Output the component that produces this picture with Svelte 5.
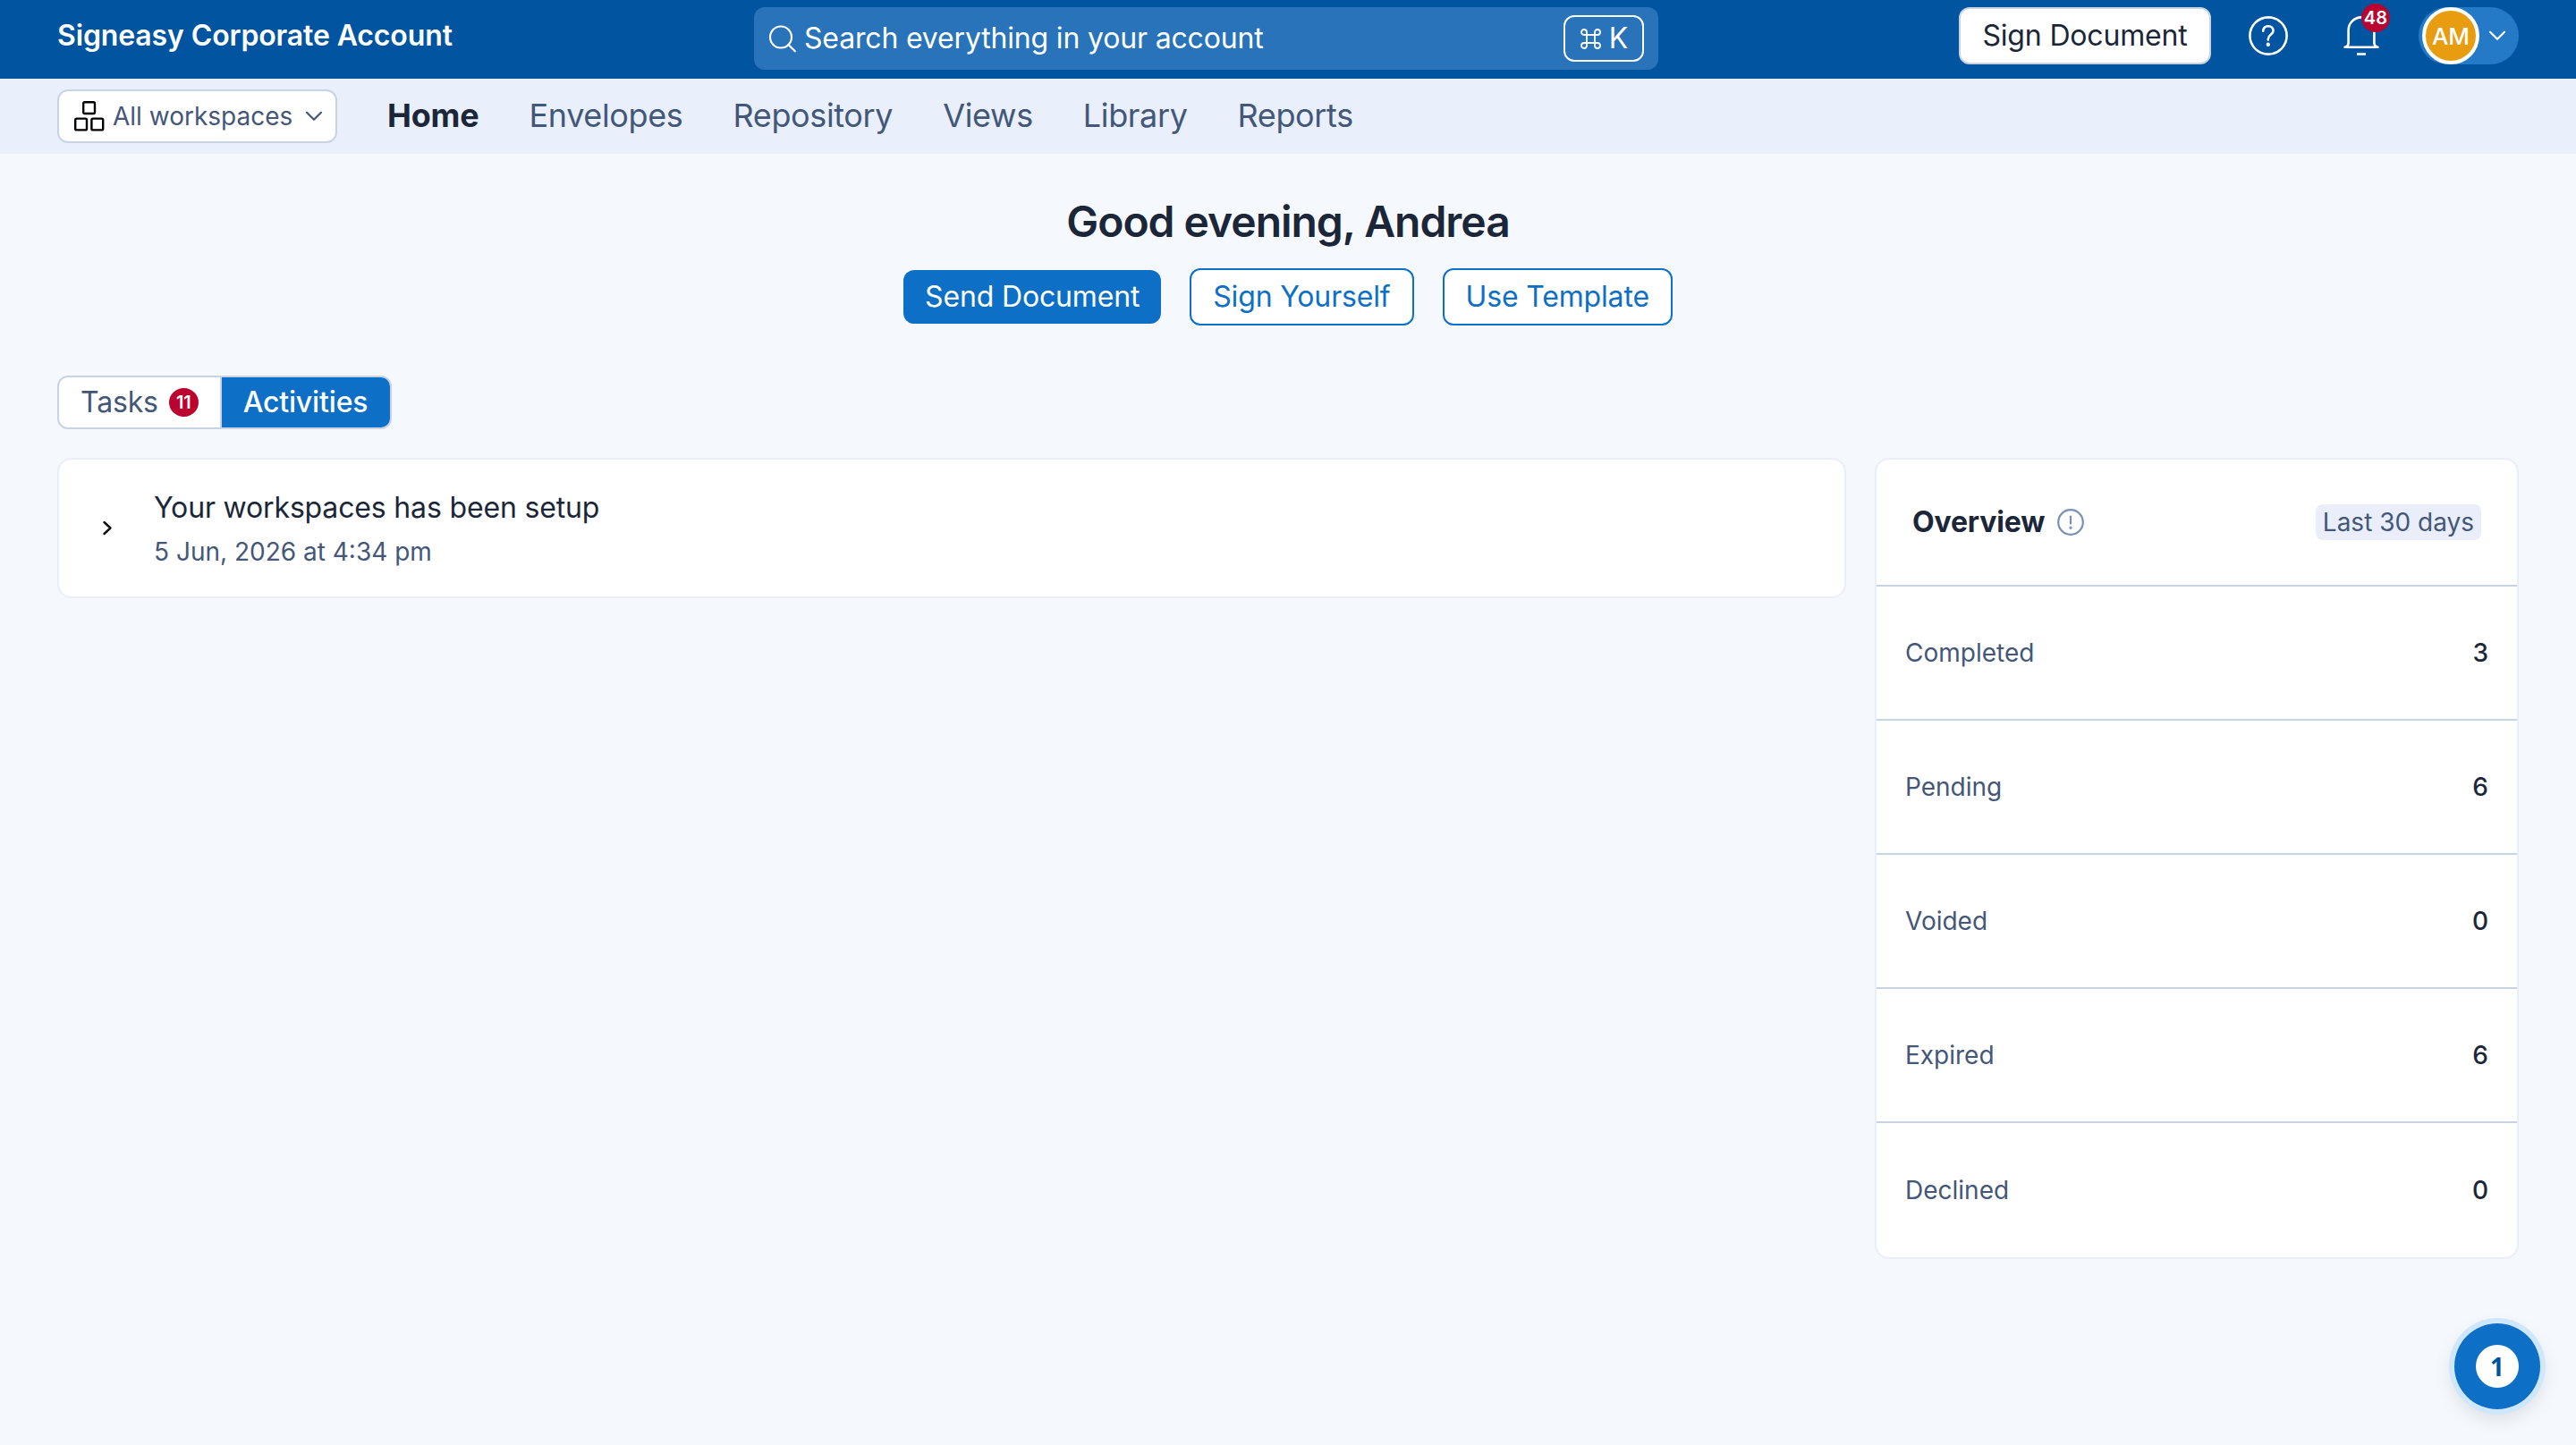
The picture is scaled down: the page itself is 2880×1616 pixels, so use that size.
<script lang="ts">
	const navItems = ["Home", "Envelopes", "Repository", "Views", "Library", "Reports"]
	const overview = [
		{ label: "Completed", count: 3 },
		{ label: "Pending", count: 6 },
		{ label: "Voided", count: 0 },
		{ label: "Expired", count: 6 },
		{ label: "Declined", count: 0 },
	]
	let current = $state("Home")
	let tab = $state("activities")
</script>

<div class="page">
	<header class="topbar">
		<div class="account">Signeasy Corporate Account</div>
		<div class="search">
			<svg width="31" height="31" viewBox="0 0 31 31" fill="none" stroke="#fff" stroke-width="2.200" stroke-linecap="round">
				<circle cx="14" cy="13.500" r="12" />
				<path d="M22.500 22l7.300 7.300" />
			</svg>
			<span class="placeholder">Search everything in your account</span>
			<span class="kbd">
				<svg width="23" height="23" viewBox="0 0 23 23" fill="none" stroke="#fff" stroke-width="1.800">
					<path d="M7 7h9v9H7zM7 7H4A3 3 0 1 1 7 4zM16 7V4A3 3 0 1 1 19 7zM16 16h3A3 3 0 1 1 16 19zM7 16v3A3 3 0 1 1 4 16z" />
				</svg>
				<span>K</span>
			</span>
		</div>
		<div class="actions">
			<button class="sign">Sign Document</button>
			<svg class="help" width="44" height="44" viewBox="0 0 44 44" fill="none" stroke="#fff" stroke-width="2.600" stroke-linecap="round" stroke-linejoin="round">
				<circle cx="22" cy="22" r="20.600" />
				<path d="M16.200 16.800c0-3.400 2.300-5.600 5.700-5.600s5.600 2.200 5.600 5.200c0 4.400-5.700 4.400-5.700 9v1.200" />
				<circle cx="21.800" cy="31.800" r="2.200" fill="#fff" stroke="none" />
			</svg>
			<div class="bell">
				<svg width="40" height="44" viewBox="0 0 40 44" fill="none" stroke="#fff" stroke-width="2.600" stroke-linejoin="round">
					<path d="M1.500 34.700h37c-2.600-.6-4.100-2.200-4.100-4.700V15.800a14.400 14.400 0 0 0-28.800 0V30c0 2.500-1.500 4.100-4.100 4.700z" />
					<path d="M15 42.500h10" />
				</svg>
				<span class="count">48</span>
			</div>
			<div class="user">
				<span class="avatar">AM</span>
				<svg width="20" height="12" viewBox="0 0 20 12" fill="none" stroke="#fff" stroke-width="2.200" stroke-linecap="round" stroke-linejoin="round">
					<path d="M2 1.800L10 9.800l8-8" />
				</svg>
			</div>
		</div>
	</header>

	<nav class="navbar">
		<button class="workspaces">
			<svg width="34" height="34" viewBox="0 0 34 34" fill="none" stroke="#000" stroke-width="2.400">
				<rect x="10.200" y="1.200" width="12.800" height="12.800" rx="1.500" />
				<rect x="1.200" y="19.600" width="12.800" height="12.800" rx="1.500" />
				<rect x="19.400" y="19.600" width="12.800" height="12.800" rx="1.500" />
			</svg>
			<span>All workspaces</span>
			<svg width="20" height="12" viewBox="0 0 20 12" fill="none" stroke="#435778" stroke-width="2.200" stroke-linecap="round" stroke-linejoin="round">
				<path d="M2 1.800L10 9.800l8-8" />
			</svg>
		</button>
		{#each navItems as item}
			<button class="navitem" class:current={item === current} onclick={() => current = item}>{item}</button>
		{/each}
	</nav>

	<main>
		<h1>Good evening, Andrea</h1>
		<div class="quick">
			<button class="primary">Send Document</button>
			<button class="outline">Sign Yourself</button>
			<button class="outline">Use Template</button>
		</div>

		<div class="tabs">
			<button class="tasks" class:selected={tab === "tasks"} onclick={() => tab = "tasks"}>
				<span class="name">Tasks</span> <span class="count">11</span>
			</button>
			<button class="activities" class:selected={tab === "activities"} onclick={() => tab = "activities"}>Activities</button>
		</div>

		<div class="columns">
			<section class="card activity">
				<svg width="12" height="18" viewBox="0 0 12 18" fill="none" stroke="#111" stroke-width="2.400" stroke-linecap="round" stroke-linejoin="round">
					<path d="M2.500 2l7 6.500l-7 6.500" />
				</svg>
				<div>
					<div class="title">Your workspaces has been setup</div>
					<div class="date">5 Jun, 2026 at 4:34 pm</div>
				</div>
			</section>
			<section class="card overview">
				<div class="head">
					<h2>Overview</h2>
					<svg width="30" height="30" viewBox="0 0 30 30" fill="none" stroke="#7790b8" stroke-width="2.200" stroke-linecap="round">
						<circle cx="15" cy="15" r="13.800" />
						<path d="M15 8.500v8" />
						<circle cx="15" cy="21.300" r=".6" fill="#7790b8" />
					</svg>
					<span class="period">Last 30 days</span>
				</div>
				{#each overview as row}
					<div class="row">
						<span>{row.label}</span>
						<b>{row.count}</b>
					</div>
				{/each}
			</section>
		</div>
	</main>

	<button class="fab"><span>1</span></button>
</div>

<style>
	:global(body) {
		background: #f5f8fd;
	}

	.page {
		min-height: 1616px;
		font-family: Inter, "Liberation Sans", sans-serif;
		color: #1b2738;
	}

	button {
		font: inherit;
		letter-spacing: inherit;
		color: inherit;
		border: none;
		background: none;
		padding: 0;
		margin: 0;
		white-space: nowrap;
		cursor: pointer;
	}

	svg {
		display: block;
		flex: none;
	}

	.topbar {
		display: grid;
		grid-template-columns: 779px 1011px 1fr;
		align-items: start;
		box-sizing: border-box;
		height: 88px;
		padding: 8px 64px 0 64px;
		background: #0054a0;
		color: #fff;
		letter-spacing: -.17px;
	}

	.account {
		font-size: 32px;
		line-height: 64px;
		font-weight: 600;
		letter-spacing: -.13px;
	}

	.search {
		display: flex;
		align-items: center;
		box-sizing: border-box;
		height: 70px;
		padding: 0 16px;
		border-radius: 12px;
		background: #2873b9;
		font-size: 32px;
	}

	.placeholder {
		flex: 1;
		margin-left: 9px;
		padding-bottom: 2px;
	}

	.kbd {
		display: flex;
		align-items: center;
		justify-content: center;
		gap: 9px;
		box-sizing: border-box;
		width: 90px;
		height: 52px;
		padding-left: 1px;
		border: 2px solid #fff;
		border-radius: 12px;
	}

	.kbd span {
		padding-bottom: 2px;
	}

	.actions {
		display: flex;
		align-items: center;
		justify-content: flex-end;
		height: 64px;
	}

	.sign {
		box-sizing: border-box;
		width: 282px;
		height: 64px;
		padding-bottom: 2px;
		border: 2px solid #c8d4e3;
		border-radius: 12px;
		background: #fff;
		color: #1b2738;
		font-size: 32px;
	}

	.help {
		margin-left: 42px;
	}

	.bell {
		position: relative;
		margin-left: 62px;
	}

	.count {
		display: flex;
		align-items: center;
		justify-content: center;
		width: 33px;
		height: 32px;
		border-radius: 50%;
		background: #bb032f;
		color: #fff;
		font-size: 20px;
		font-weight: 600;
	}

	.bell .count {
		position: absolute;
		left: 20px;
		top: -14px;
		width: 32px;
		letter-spacing: .2px;
	}

	.user {
		display: flex;
		align-items: center;
		gap: 10px;
		box-sizing: border-box;
		width: 112px;
		height: 64px;
		margin-left: 44px;
		padding-left: 4px;
		border-radius: 32px;
		background: #247ac6;
	}

	.avatar {
		display: flex;
		align-items: center;
		justify-content: center;
		box-sizing: border-box;
		width: 64px;
		height: 64px;
		border: 4px solid #fff;
		border-radius: 50%;
		background: #e89c10;
		font-size: 26px;
		font-weight: 500;
	}

	.navbar {
		display: flex;
		align-items: center;
		gap: 56px;
		box-sizing: border-box;
		height: 84px;
		padding: 0 64px;
		background: #e9f0fc;
		color: #435778;
	}

	.workspaces {
		display: flex;
		align-items: center;
		box-sizing: border-box;
		width: 313px;
		height: 60px;
		padding-left: 17px;
		border: 2px solid #c8d4e3;
		border-radius: 12px;
		background: #fff;
		font-size: 28px;
	}

	.workspaces span {
		margin: 0 14px 0 9px;
	}

	.navitem {
		padding-bottom: 2px;
		font-size: 36px;
		letter-spacing: -.36px;
	}

	.current {
		color: #1b2738;
		font-weight: 700;
		letter-spacing: -.2px;
	}

	main {
		padding: 44px 64px 0;
		letter-spacing: -.16px;
	}

	h1 {
		margin: 0;
		text-align: center;
		font-size: 48px;
		line-height: 64px;
		font-weight: 600;
		letter-spacing: -1.03px;
	}

	.quick {
		display: flex;
		align-items: center;
		justify-content: center;
		gap: 32px;
		margin-top: 20px;
		font-size: 32px;
	}

	.primary {
		height: 60px;
		padding: 0 24px 2px;
		border-radius: 12px;
		background: #0d6fc5;
		color: #fff;
	}

	.outline {
		height: 64px;
		padding: 0 24px 2px;
		border: 2px solid #0d6fc5;
		border-radius: 12px;
		background: #fff;
		color: #0d6fc5;
	}

	.tabs {
		display: flex;
		box-sizing: border-box;
		width: 374px;
		height: 60px;
		margin-top: 56px;
		border: 2px solid #c8d4e3;
		border-radius: 12px;
		background: #fff;
		overflow: hidden;
		font-size: 32px;
		color: #435778;
	}

	.tasks {
		display: flex;
		align-items: center;
		gap: 12px;
		box-sizing: border-box;
		width: 182px;
		padding-left: 24px;
		border-right: 2px solid #c8d4e3;
	}

	.name {
		padding-bottom: 2px;
	}

	.activities {
		flex: 1;
		padding: 0 1px 2px 0;
	}

	.selected {
		background: #0d6fc5;
		color: #fff;
		font-weight: 500;
	}

	.columns {
		display: grid;
		grid-template-columns: 1fr 720px;
		gap: 32px;
		align-items: start;
		margin-top: 32px;
	}

	.card {
		box-sizing: border-box;
		border: 2px solid #e9eefa;
		border-radius: 16px;
		background: #fff;
	}

	.activity {
		display: flex;
		align-items: center;
		gap: 46px;
		height: 157px;
		padding-left: 48px;
	}

	.title {
		padding-top: 2px;
		font-size: 32px;
		line-height: 48px;
	}

	.date {
		margin-top: 3px;
		font-size: 28px;
		line-height: 44px;
		letter-spacing: 0;
		color: #435778;
	}

	.head {
		display: flex;
		align-items: center;
		height: 140px;
		padding: 0 40px;
	}

	h2 {
		margin: 0 14px 0 0;
		padding-bottom: 1px;
		font-size: 32px;
		font-weight: 700;
	}

	.period {
		margin-left: auto;
		padding: 0 8px;
		border-radius: 8px;
		background: #e9eefa;
		color: #435778;
		font-size: 28px;
		line-height: 40px;
		letter-spacing: 0;
	}

	.row {
		display: flex;
		align-items: center;
		justify-content: space-between;
		box-sizing: border-box;
		height: 150px;
		padding: 0 32px;
		border-top: 2px solid #c8d4e3;
		font-size: 28px;
		letter-spacing: 0;
		color: #435778;
	}

	.row:last-child {
		height: 152px;
	}

	.row b {
		font-weight: 500;
		color: #1b2738;
	}

	.fab {
		position: fixed;
		right: 40px;
		bottom: 40px;
		display: flex;
		align-items: center;
		justify-content: center;
		width: 96px;
		height: 96px;
		border-radius: 50%;
		background: #0d6fc5;
		box-shadow: 0 0 0 6px #cfe7fa, 0 8px 20px 4px rgba(0, 0, 0, .1);
	}

	.fab span {
		width: 48px;
		border-radius: 50%;
		background: #fff;
		color: #0054a0;
		font-family: "Open Sans", "Noto Sans", sans-serif;
		font-size: 28px;
		line-height: 48px;
		font-weight: 700;
	}
</style>
